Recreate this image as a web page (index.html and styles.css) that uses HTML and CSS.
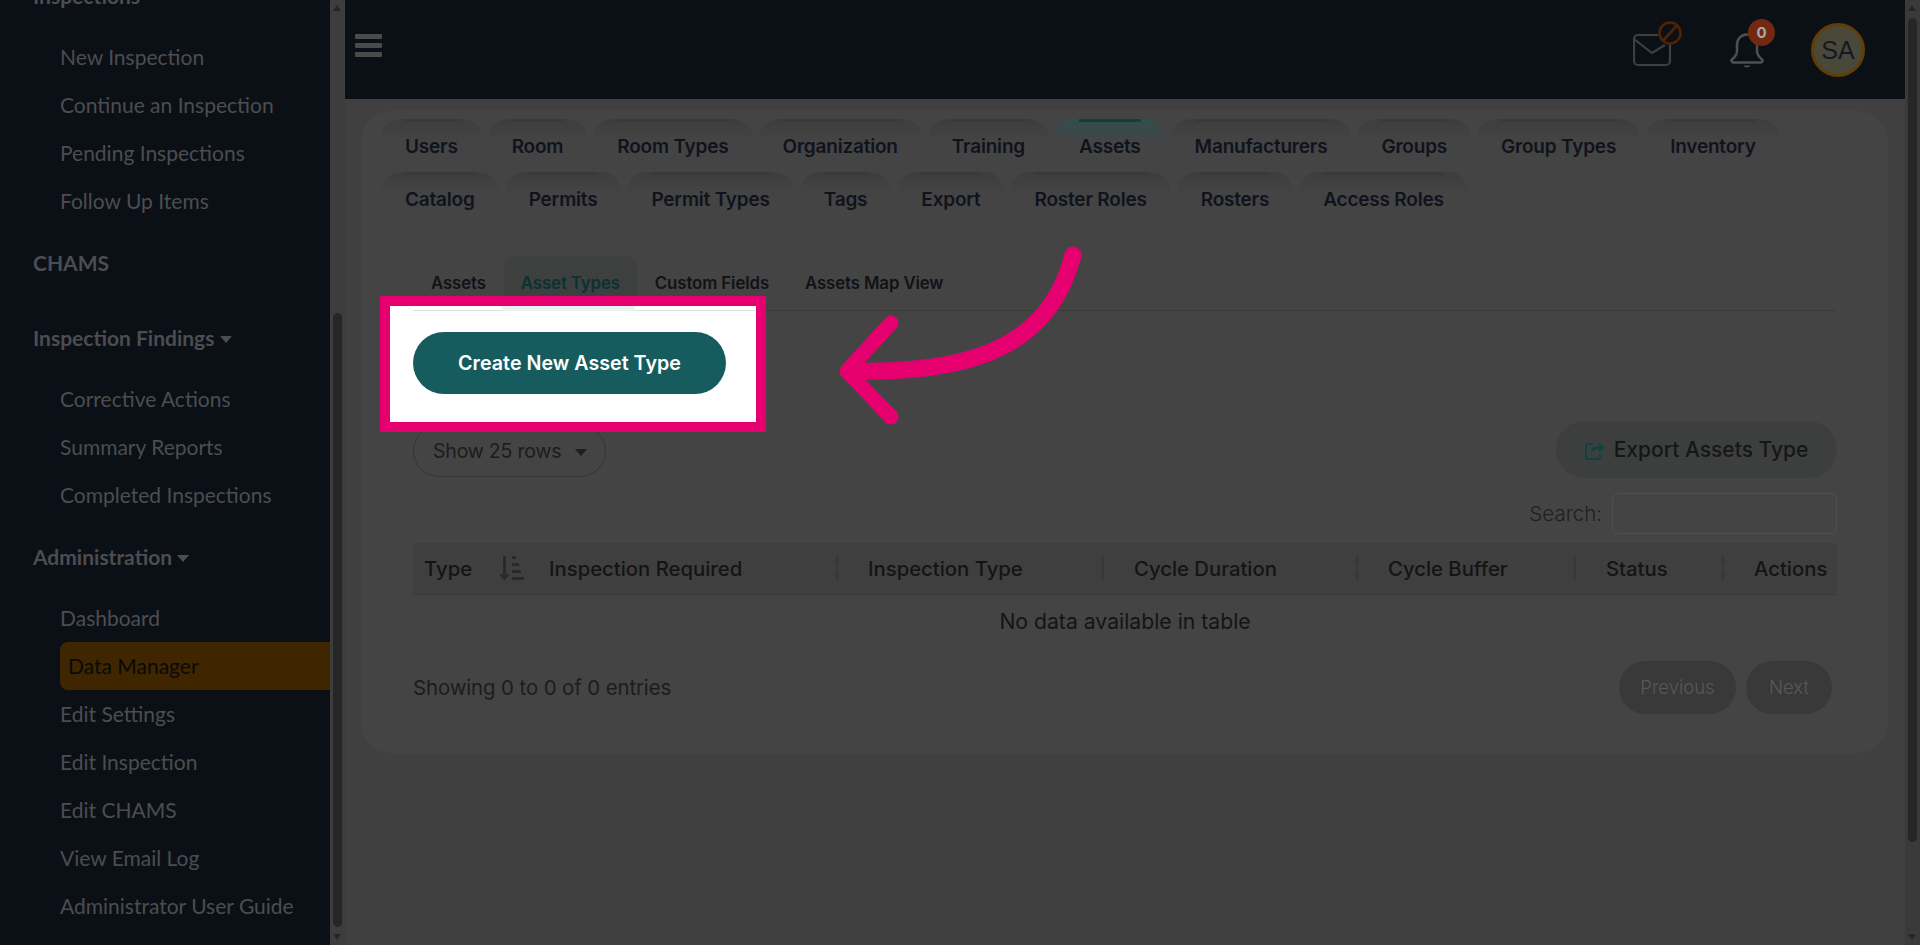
FILE: index.html
```html
<!DOCTYPE html>
<html lang="en">

<head>
    <meta charset="UTF-8">
    <meta name="viewport" content="width=device-width, initial-scale=1.0">
    <title>Data Manager - Asset Types</title>
    <link rel="stylesheet" href="styles.css">
</head>

<body>

    <aside class="sidebar">
        <div class="sidebar-inner">
            <div class="side-head">Inspections</div>
            <ul class="side-list">
                <li>New Inspection</li>
                <li>Continue an Inspection</li>
                <li>Pending Inspections</li>
                <li>Follow Up Items</li>
            </ul>
            <div class="side-head side-head-single">CHAMS</div>
            <div class="side-head">Inspection Findings <span class="caret"></span></div>
            <ul class="side-list">
                <li>Corrective Actions</li>
                <li>Summary Reports</li>
                <li>Completed Inspections</li>
            </ul>
            <div class="side-head side-head-admin">Administration <span class="caret"></span></div>
            <ul class="side-list">
                <li>Dashboard</li>
                <li class="active">Data Manager</li>
                <li>Edit Settings</li>
                <li>Edit Inspection</li>
                <li>Edit CHAMS</li>
                <li>View Email Log</li>
                <li>Administrator User Guide</li>
            </ul>
        </div>
    </aside>

    <div class="scrollbar scrollbar-side">
        <span class="arrow-up"></span>
        <span class="thumb"></span>
        <span class="arrow-down"></span>
    </div>

    <div class="page">
        <header class="topbar">
            <div class="hamburger"><span></span><span></span><span></span></div>
            <div class="top-icons">
                <svg class="mail-icon" width="50" height="46" viewBox="0 0 50 46" fill="none">
                    <path d="M25 14H5a4 4 0 0 0-4 4v22a4 4 0 0 0 4 4h28a4 4 0 0 0 4-4V22" stroke="#3d4043" stroke-width="2.2" />
                    <path d="M1.500 18.500L19 32l13-8" stroke="#3d4043" stroke-width="2.2" />
                    <circle cx="37" cy="12" r="10.500" stroke="#522300" stroke-width="2.600" />
                    <path d="M30 19.500l14-15" stroke="#522300" stroke-width="2.600" />
                </svg>
                <div class="bell">
                    <svg width="34" height="36" viewBox="0 0 34 36" fill="none">
                        <path d="M17 1.500c-6 0-10 4.500-10 10.500v6c0 3.500-2 6-5 8.500-1 1-.5 3 1.500 3h27c2 0 2.500-2 1.500-3-3-2.500-5-5-5-8.500v-6c0-6-4-10.500-10-10.500z" stroke="#4f5052" stroke-width="2.500" />
                        <path d="M13.500 32.500c1 2.500 6 2.500 7 0z" fill="#4f5052" />
                    </svg>
                    <span class="badge">0</span>
                </div>
                <div class="avatar">SA</div>
            </div>
        </header>

        <main class="card">
            <nav class="tabs">
                <a class="tab">Users</a>
                <a class="tab">Room</a>
                <a class="tab">Room Types</a>
                <a class="tab">Organization</a>
                <a class="tab">Training</a>
                <a class="tab tab-active">Assets</a>
                <a class="tab">Manufacturers</a>
                <a class="tab">Groups</a>
                <a class="tab">Group Types</a>
                <a class="tab">Inventory</a>
                <a class="tab">Catalog</a>
                <a class="tab">Permits</a>
                <a class="tab">Permit Types</a>
                <a class="tab">Tags</a>
                <a class="tab">Export</a>
                <a class="tab">Roster Roles</a>
                <a class="tab">Rosters</a>
                <a class="tab">Access Roles</a>
            </nav>

            <div class="panel">
                <div class="subtabs">
                    <a class="subtab">Assets</a>
                    <a class="subtab subtab-active">Asset Types</a>
                    <a class="subtab">Custom Fields</a>
                    <a class="subtab">Assets Map View</a>
                </div>

                <div class="table-top">
                    <div class="rows-select">Show 25 rows <span class="caret caret-dark"></span></div>
                    <button class="export-btn">
                        <svg width="20" height="20" viewBox="0 0 20 20" fill="none">
                            <path d="M8 4H2.500A1.500 1.500 0 0 0 1 5.500v12A1.500 1.500 0 0 0 2.500 19h11a1.500 1.500 0 0 0 1.500-1.500V14" stroke="#0d4341" stroke-width="2" />
                            <path d="M6 13c0-5 3-7 8-7V2.500L19.500 7.500 14 12.500V9c-4 0-6 1-8 4z" fill="#0d4341" />
                        </svg>
                        Export Assets Type
                    </button>
                </div>

                <div class="search-row">
                    <label>Search:</label>
                    <input type="text">
                </div>

                <table class="data-table">
                    <thead>
                        <tr>
                            <th class="col-type">
                                <div class="th-in">Type
                                    <svg width="25" height="26" viewBox="0 0 25 26" fill="#2a2a2a">
                                        <path d="M4 1h3v18h4l-5.500 6.500L0 19h4z" />
                                        <rect x="13" y="1" width="4" height="3" />
                                        <rect x="13" y="8" width="7" height="3" />
                                        <rect x="13" y="15" width="9" height="3" />
                                        <rect x="13" y="22" width="12" height="3" />
                                    </svg>
                                </div>
                            </th>
                            <th class="col-req"><div class="th-in">Inspection Required<span class="sort"></span></div></th>
                            <th class="col-itype"><div class="th-in">Inspection Type<span class="sort"></span></div></th>
                            <th class="col-dur"><div class="th-in">Cycle Duration<span class="sort"></span></div></th>
                            <th class="col-buf"><div class="th-in">Cycle Buffer<span class="sort"></span></div></th>
                            <th class="col-status"><div class="th-in">Status<span class="sort"></span></div></th>
                            <th class="col-actions"><div class="th-in">Actions</div></th>
                        </tr>
                    </thead>
                    <tbody>
                        <tr>
                            <td colspan="7">No data available in table</td>
                        </tr>
                    </tbody>
                </table>

                <div class="table-foot">
                    <div class="entries">Showing 0 to 0 of 0 entries</div>
                    <div class="pager">
                        <a class="page-btn page-prev">Previous</a>
                        <a class="page-btn page-next">Next</a>
                    </div>
                </div>
            </div>
        </main>
    </div>

    <div class="scrollbar scrollbar-page">
        <span class="arrow-up"></span>
        <span class="thumb"></span>
        <span class="arrow-down"></span>
    </div>

    <!-- highlight box from the guide, sits over the page -->
    <div class="spot">
        <div class="spot-line"><span></span></div>
        <button class="create-btn">Create New Asset Type</button>
    </div>

    <svg class="guide-arrow" width="260" height="190" viewBox="830 240 260 190" fill="none">
        <path d="M1073 255C1052 338 985 374 855 371" stroke="#e6006f" stroke-width="17" stroke-linecap="round" />
        <path d="M891 323L847 371L891 417" stroke="#e6006f" stroke-width="15" stroke-linecap="round" stroke-linejoin="round" />
    </svg>

</body>

</html>
```
FILE: styles.css
```css
* {
    box-sizing: border-box;
}

html,
body {
    height: 100%;
    margin: 0;
    overflow: hidden;
}

body {
    display: flex;
    background-color: #404040;
    font-family: Inter, "Noto Sans", sans-serif;
    color: #1a1b1f;
}

/* sidebar */
.sidebar {
    width: 330px;
    height: 945px;
    flex: none;
    overflow: hidden;
    background-color: #0b1016;
    font-family: Lato, "Liberation Sans", sans-serif;
    font-size: 21px;
    color: #4b4d50;
}

.sidebar-inner {
    margin-top: -28px;
}

.side-head {
    height: 48px;
    line-height: 48px;
    margin: 13px 0;
    padding-left: 33px;
    font-weight: 700;
}

.sidebar-inner .side-head:first-child {
    margin-top: 0;
}

.side-head-single {
    margin-top: 14px;
    margin-bottom: 27px;
}

.side-head-admin {
    margin-top: 14px;
}

.side-list {
    list-style: none;
    margin: 0;
    padding: 0 0 0 60px;
}

.side-list li {
    height: 48px;
    line-height: 48px;
}

.side-list li.active {
    padding-left: 8px;
    background-color: #3f2600;
    border-radius: 8px 0 0 8px;
    color: #0a0a08;
}

.caret {
    display: inline-block;
    width: 0;
    height: 0;
    vertical-align: 3px;
    border-left: 6px solid transparent;
    border-right: 6px solid transparent;
    border-top: 7px solid #4b4d50;
}

/* scrollbars */
.scrollbar {
    position: relative;
    width: 15px;
    height: 945px;
    flex: none;
    background-color: #3d3d3d;
}

.thumb {
    position: absolute;
    left: 3px;
    width: 9px;
    background-color: #262626;
    border-radius: 5px;
}

.scrollbar-side .thumb {
    top: 313px;
    height: 614px;
}

.scrollbar-page {
    background-color: #3a3a3a;
}

.scrollbar-page .thumb {
    top: 18px;
    height: 824px;
}

.arrow-up,
.arrow-down {
    position: absolute;
    left: 3px;
    width: 0;
    height: 0;
    border-left: 4.500px solid transparent;
    border-right: 4.500px solid transparent;
}

.arrow-up {
    top: 5px;
    border-bottom: 6px solid #262626;
}

.arrow-down {
    bottom: 5px;
    border-top: 6px solid #262626;
}

/* page */
.page {
    flex: 1;
    min-width: 0;
}

.topbar {
    height: 99px;
    display: flex;
    align-items: center;
    justify-content: space-between;
    padding: 0 40px 0 10px;
    background-color: #0b1016;
}

.hamburger {
    display: flex;
    flex-direction: column;
    gap: 4px;
    margin-top: -9px;
}

.hamburger span {
    display: block;
    width: 27px;
    height: 5px;
    background-color: #4a4a4a;
    border-radius: 1px;
}

.top-icons {
    display: flex;
    align-items: center;
}

.mail-icon {
    margin: -11px 47px 0 0;
}

.bell {
    position: relative;
    width: 46px;
    margin: 2px 35px 0 0;
}

.bell svg {
    display: block;
}

.badge {
    position: absolute;
    top: -14px;
    left: 18px;
    width: 27px;
    height: 27px;
    line-height: 27px;
    border-radius: 50%;
    background-color: #742810;
    color: #a9a9a9;
    font-size: 15px;
    font-weight: 700;
    text-align: center;
}

.avatar {
    width: 54px;
    height: 54px;
    line-height: 48px;
    border: 3px solid #5f3f05;
    border-radius: 50%;
    background-color: #4a4838;
    color: #141824;
    font-family: "Liberation Sans", Arial, sans-serif;
    font-size: 25px;
    text-align: center;
}

.card {
    height: 642px;
    margin: 12px 17px 0 16px;
    padding: 8px 20px 0;
    background-color: #444444;
    border-radius: 30px;
}

/* top tabs */
.tabs {
    display: flex;
    flex-wrap: wrap;
    column-gap: 6px;
    row-gap: 0;
}

.tab {
    position: relative;
    height: 53px;
    padding: 17px 24px 0;
    border-radius: 20px 20px 0 0;
    background: linear-gradient(#3d3d3d, #444444 42%);
    color: #10131c;
    font-size: 19px;
    font-weight: 600;
    line-height: 22px;
    text-align: center;
    letter-spacing: -0.2px;
}

.tab-active {
    background: linear-gradient(#2f4f4d, #444444 42%);
}

.tab::before {
    content: "";
    position: absolute;
    top: 0;
    left: 24px;
    right: 24px;
    height: 3px;
    background-color: #38393b;
}

.tab-active::before {
    background-color: #123f3e;
}

/* sub tabs */
.panel {
    padding: 31px 31px 0 32px;
}

.subtabs {
    display: flex;
    height: 55px;
    border-bottom: 1px solid #3a3a3a;
}

.subtab {
    padding: 17px 18px 0;
    color: #101216;
    font-size: 16.800px;
    font-weight: 600;
    line-height: 20px;
    letter-spacing: -0.1px;
    white-space: nowrap;
}

.subtab-active {
    width: 133px;
    padding: 17px 0 0;
    margin: 0 0 -1px;
    background-color: #3d403f;
    border-radius: 12px 12px 0 0;
    color: #0a3231;
    text-align: center;
}

/* table controls */
.table-top {
    display: flex;
    justify-content: space-between;
    margin-top: 114px;
}

.rows-select {
    width: 193px;
    height: 52px;
    padding: 0 0 0 19px;
    border: 1px solid #353535;
    border-radius: 26px;
    color: #1c1c1c;
    font-size: 19.500px;
    font-weight: 400;
    line-height: 50px;
    letter-spacing: -0.2px;
}

.caret-dark {
    margin-left: 8px;
    vertical-align: 2px;
    border-top-color: #1f1f1f;
}

.export-btn {
    display: flex;
    align-items: center;
    justify-content: center;
    gap: 9px;
    width: 281px;
    height: 57px;
    margin-top: -4px;
    border: none;
    border-radius: 29px;
    background-color: #3d3f3e;
    color: #15161a;
    font-family: inherit;
    font-size: 21px;
    font-weight: 500;
}

.search-row {
    display: flex;
    justify-content: flex-end;
    align-items: center;
    gap: 10px;
    margin-top: 15px;
    color: #1f1f1f;
    font-size: 20.500px;
    font-weight: 300;
}

.search-row input {
    width: 225px;
    height: 41px;
    background: none;
    border: 1px solid #4f4f4f;
    border-radius: 6px;
}

/* table */
.data-table {
    width: 100%;
    margin-top: 9px;
    border-collapse: collapse;
    table-layout: fixed;
}

.data-table th {
    height: 51px;
    padding: 0 0 0 11px;
    background-color: #3f3f3f;
    border-bottom: 1px solid #3b3b3b;
    color: #141414;
    font-size: 20.300px;
    font-weight: 500;
    text-align: left;
}

.th-in {
    display: flex;
    align-items: center;
    justify-content: space-between;
    padding-right: 17px;
    white-space: nowrap;
}

.col-type { width: 125px; }
.col-req { width: 319px; }
.col-itype { width: 266px; }
.col-dur { width: 254px; }
.col-buf { width: 218px; }
.col-status { width: 148px; }

.col-type .th-in {
    padding-right: 14px;
}

.col-actions .th-in {
    padding-right: 0;
}

.sort {
    position: relative;
    width: 6px;
    height: 24px;
    background: linear-gradient(90deg, transparent 2px, #383838 2px, #383838 4px, transparent 4px);
}

.sort::before,
.sort::after {
    content: "";
    position: absolute;
    left: 0;
    width: 0;
    height: 0;
    border-left: 3px solid transparent;
    border-right: 3px solid transparent;
}

.sort::before {
    top: 0;
    border-bottom: 5px solid #383838;
}

.sort::after {
    bottom: 0;
    border-top: 5px solid #383838;
}

.data-table td {
    height: 54px;
    color: #141414;
    font-size: 21.200px;
    font-weight: 400;
    text-align: center;
}

.table-foot {
    display: flex;
    justify-content: space-between;
    align-items: center;
    margin-top: 13px;
}

.entries {
    color: #1c1c1c;
    font-size: 20.400px;
    font-weight: 400;
    letter-spacing: -0.1px;
}

.pager {
    display: flex;
    gap: 10px;
    margin-right: 5px;
}

.page-btn {
    height: 53px;
    line-height: 53px;
    border-radius: 27px;
    background-color: #393939;
    color: #585858;
    font-size: 18.500px;
    font-weight: 300;
    text-align: center;
}

.page-prev {
    width: 117px;
}

.page-next {
    width: 86px;
}

/* highlight over the page */
.spot {
    position: absolute;
    left: 380px;
    top: 296px;
    width: 386px;
    height: 136px;
    border: 10px solid #e6006f;
    background-color: #fff;
}

.spot-line {
    height: 5px;
    margin-left: 23px;
    border-bottom: 1px solid #e0e0e0;
}

.spot-line span {
    display: block;
    width: 133px;
    height: 5px;
    margin-left: 89px;
    background-color: #eaf3f2;
}

.create-btn {
    display: block;
    width: 313px;
    height: 62px;
    margin: 21px 0 0 23px;
    border: none;
    border-radius: 31px;
    background-color: #165c5e;
    color: #fff;
    font-family: inherit;
    font-size: 19.700px;
    font-weight: 600;
}

.guide-arrow {
    position: absolute;
    left: 830px;
    top: 240px;
}
```
